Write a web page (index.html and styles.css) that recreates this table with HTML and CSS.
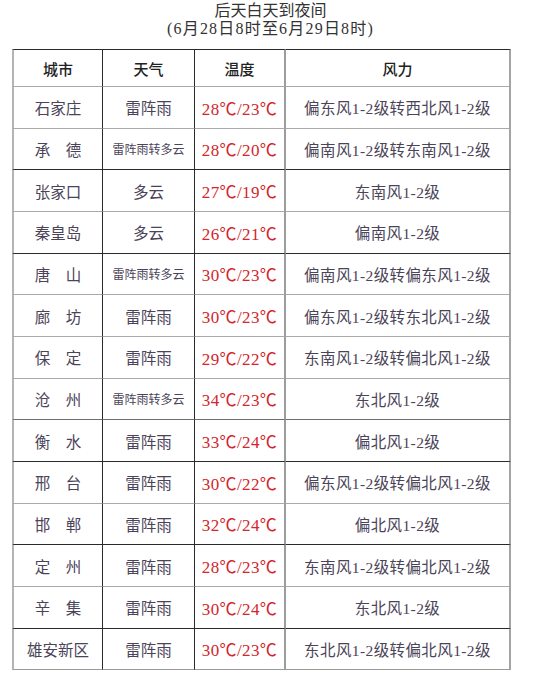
FILE: index.html
```html
<!DOCTYPE html>
<html lang="zh-CN">
<head>
<meta charset="utf-8">
<title>后天白天到夜间</title>
<link rel="stylesheet" href="styles.css">
</head>
<body>
<div class="title">
  <div class="t1">后天白天到夜间</div>
  <div class="t2">(6月28日8时至6月29日8时)</div>
</div>
<table class="wx">
  <thead>
    <tr><th class="c1">城市</th><th class="c2">天气</th><th class="c3">温度</th><th class="c4">风力</th></tr>
  </thead>
  <tbody>
    <tr class="g"><td class="c1">石家庄</td><td class="c2">雷阵雨</td><td class="c3">28℃/23℃</td><td class="c4">偏东风1-2级转西北风1-2级</td></tr>
    <tr class="d"><td class="c1">承　德</td><td class="c2 sm">雷阵雨转多云</td><td class="c3">28℃/20℃</td><td class="c4">偏南风1-2级转东南风1-2级</td></tr>
    <tr class="g"><td class="c1">张家口</td><td class="c2">多云</td><td class="c3">27℃/19℃</td><td class="c4">东南风1-2级</td></tr>
    <tr class="d"><td class="c1">秦皇岛</td><td class="c2">多云</td><td class="c3">26℃/21℃</td><td class="c4">偏南风1-2级</td></tr>
    <tr class="g"><td class="c1">唐　山</td><td class="c2 sm">雷阵雨转多云</td><td class="c3">30℃/23℃</td><td class="c4">偏南风1-2级转偏东风1-2级</td></tr>
    <tr class="g"><td class="c1">廊　坊</td><td class="c2">雷阵雨</td><td class="c3">30℃/23℃</td><td class="c4">偏东风1-2级转东北风1-2级</td></tr>
    <tr class="g"><td class="c1">保　定</td><td class="c2">雷阵雨</td><td class="c3">29℃/22℃</td><td class="c4">东南风1-2级转偏北风1-2级</td></tr>
    <tr class="m"><td class="c1">沧　州</td><td class="c2 sm">雷阵雨转多云</td><td class="c3">34℃/23℃</td><td class="c4">东北风1-2级</td></tr>
    <tr class="d"><td class="c1">衡　水</td><td class="c2">雷阵雨</td><td class="c3">33℃/24℃</td><td class="c4">偏北风1-2级</td></tr>
    <tr class="g"><td class="c1">邢　台</td><td class="c2">雷阵雨</td><td class="c3">30℃/22℃</td><td class="c4">偏东风1-2级转偏北风1-2级</td></tr>
    <tr class="d"><td class="c1">邯　郸</td><td class="c2">雷阵雨</td><td class="c3">32℃/24℃</td><td class="c4">偏北风1-2级</td></tr>
    <tr class="g"><td class="c1">定　州</td><td class="c2">雷阵雨</td><td class="c3">28℃/23℃</td><td class="c4">东南风1-2级转偏北风1-2级</td></tr>
    <tr class="d"><td class="c1">辛　集</td><td class="c2">雷阵雨</td><td class="c3">30℃/24℃</td><td class="c4">东北风1-2级</td></tr>
    <tr class="g last"><td class="c1">雄安新区</td><td class="c2">雷阵雨</td><td class="c3">30℃/23℃</td><td class="c4">东北风1-2级转偏北风1-2级</td></tr>
  </tbody>
</table>
</body>
</html>
```

FILE: styles.css
```css
html, body {
  margin: 0;
  padding: 0;
  background: #ffffff;
}

body {
  font-family: "Liberation Serif", "Noto Sans CJK SC", serif;
  color: #4b4458;
  width: 541px;
}

.title {
  padding-top: 2px;
  text-align: center;
  color: #333333;
  font-size: 16px;
  line-height: 18px;
  margin-bottom: 11px;
}

.t2 {
  letter-spacing: 1.2px;
}

.wx {
  margin-left: 12px;
  width: 499px;
  table-layout: fixed;
  border-collapse: separate;
  border-spacing: 0;
}

.wx th,
.wx td {
  box-sizing: border-box;
  padding: 0;
  text-align: center;
  vertical-align: middle;
  border-bottom: 1px solid #a9a9a9;
  border-right: 1px solid #2a2a2a;
}

.wx th {
  height: 38px;
  border-top: 1px solid #2a2a2a;
  font-size: 15px;
  font-weight: 500;
  color: #222222;
}

.wx td {
  height: 41.67px;
  font-size: 15.5px;
}

.wx .c1 {
  width: 91px;
  border-left: 2px solid #b4b4b4;
}

.wx .c2 {
  width: 92px;
}

.wx .c3 {
  width: 91px;
  border-right: 2px solid #9c9c9c;
}

.wx .c4 {
  width: 225px;
  border-right: 2px solid #a4a4a4;
}

.wx td.c4 {
  letter-spacing: 0.4px;
}

.wx td.c3 {
  color: #d3262c;
  font-size: 17px;
  letter-spacing: 0.4px;
}

.wx td.sm {
  font-size: 12px;
}

.wx tr.d td {
  border-bottom-color: #2a2a2a;
}

.wx tr.m td {
  border-bottom-color: #6e6e6e;
}

.wx tr.last td {
  border-bottom-color: #9a9a9a;
}
```
